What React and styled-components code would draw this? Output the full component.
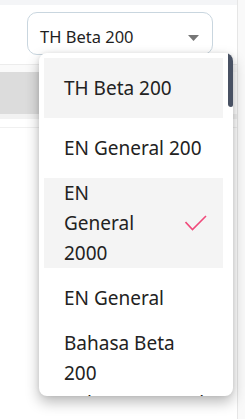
import React from "react";
import styled, { createGlobalStyle } from "styled-components";

const Global = createGlobalStyle`
  html, body { margin: 0; padding: 0; background: #ffffff; }
  body { font-family: "Noto Sans", "Open Sans", sans-serif; color: #222; }
  * { box-sizing: border-box; }
`;

const Page = styled.div`
  display: flex;
  width: 245px;
  height: 419px;
  overflow: hidden;
  background: #ffffff;
`;

const Main = styled.div`
  flex: 1;
  display: flex;
  flex-direction: column;
`;

const Gutter = styled.div`
  width: 8px;
  border-left: 1px solid #e6e6e6;
  background: #f9f9f9;
`;

const TopStrip = styled.div`
  height: 5px;
  background: #f4f5f7;
`;

const Header = styled.div`
  height: 60px;
  padding: 7px 0 0 27px;
  border-bottom: 1px solid #ececec;
`;

const Gap = styled.div`
  height: ${(p) => p.h}px;
  background: ${(p) => p.bg || "transparent"};
`;

const GrayBar = styled.div`
  height: 42px;
  width: 200px;
  background: #dcdcdc;
`;

const Line = styled.div`
  height: 1px;
  background: #f0f0f0;
`;

const SelectWrap = styled.div`
  position: relative;
  width: 186px;
`;

const SelectBox = styled.div`
  height: 43px;
  border: 1px solid #c9d6df;
  border-radius: 10px;
  padding: 12px 12px 0 12px;
  display: flex;
  align-items: flex-start;
  justify-content: space-between;
  background: #fff;
`;

const SelectText = styled.span`
  font-size: 16.5px;
  line-height: 24px;
  color: #1f1f1f;
`;

const Caret = styled.svg`
  margin-top: 10px;
  margin-right: 1px;
`;

const Dropdown = styled.div`
  position: absolute;
  top: 41px;
  left: 12px;
  width: 194px;
  height: 343px;
  background: #fff;
  border-radius: 8px;
  box-shadow: 0 6px 14px rgba(0, 0, 0, 0.28), 0 0 4px rgba(0, 0, 0, 0.08);
  overflow: hidden;
`;

const List = styled.div`
  display: flex;
  flex-direction: column;
  padding: 5px 10px 0 5px;
`;

const Item = styled.div`
  display: flex;
  align-items: center;
  min-height: 60px;
  padding: 0 16px 0 20px;
  background: ${(p) => (p.$active ? "#f4f4f4" : "transparent")};
  font-size: 19px;
  line-height: 30px;
  color: #222;
`;

const Label = styled.span`
  flex: 1;
  min-width: 0;
`;

const Check = styled.svg`
  flex: none;
  margin-left: 36px;
`;

const Thumb = styled.div`
  position: absolute;
  top: 0;
  right: 0;
  width: 5px;
  height: 54px;
  background: #485163;
  border-radius: 0 0 2px 3px;
`;

const items = [
  { label: "TH Beta 200", hover: true },
  { label: "EN General 200" },
  { label: "EN General 2000", selected: true },
  { label: "EN General" },
  { label: "Bahasa Beta 200" },
  { label: "Bahasa General 200" },
  { label: "TH General 200" },
];

export default function App() {
  return (
    <>
      <Global />
      <Page>
        <Main>
          <TopStrip />
          <Header>
            <SelectWrap>
              <SelectBox>
                <SelectText>TH Beta 200</SelectText>
                <Caret width="11" height="6" viewBox="0 0 11 6">
                  <path d="M0 0 H11 L5.5 6 Z" fill="#767676" />
                </Caret>
              </SelectBox>
              <Dropdown>
                <List>
                  {items.map((it) => (
                    <Item key={it.label} $active={it.hover || it.selected}>
                      <Label>{it.label}</Label>
                      {it.selected && (
                        <Check width="22" height="16" viewBox="0 0 22 16">
                          <path
                            d="M0.5 7 L7.5 14.5 L21 1"
                            fill="none"
                            stroke="#f04a7b"
                            strokeWidth="1.6"
                          />
                        </Check>
                      )}
                    </Item>
                  ))}
                </List>
                <Thumb />
              </Dropdown>
            </SelectWrap>
          </Header>
          <Gap h={7} bg="#fafafa" />
          <GrayBar />
          <Gap h={5} bg="#f2f2f2" />
          <Gap h={8} />
          <Line />
        </Main>
        <Gutter />
      </Page>
    </>
  );
}
